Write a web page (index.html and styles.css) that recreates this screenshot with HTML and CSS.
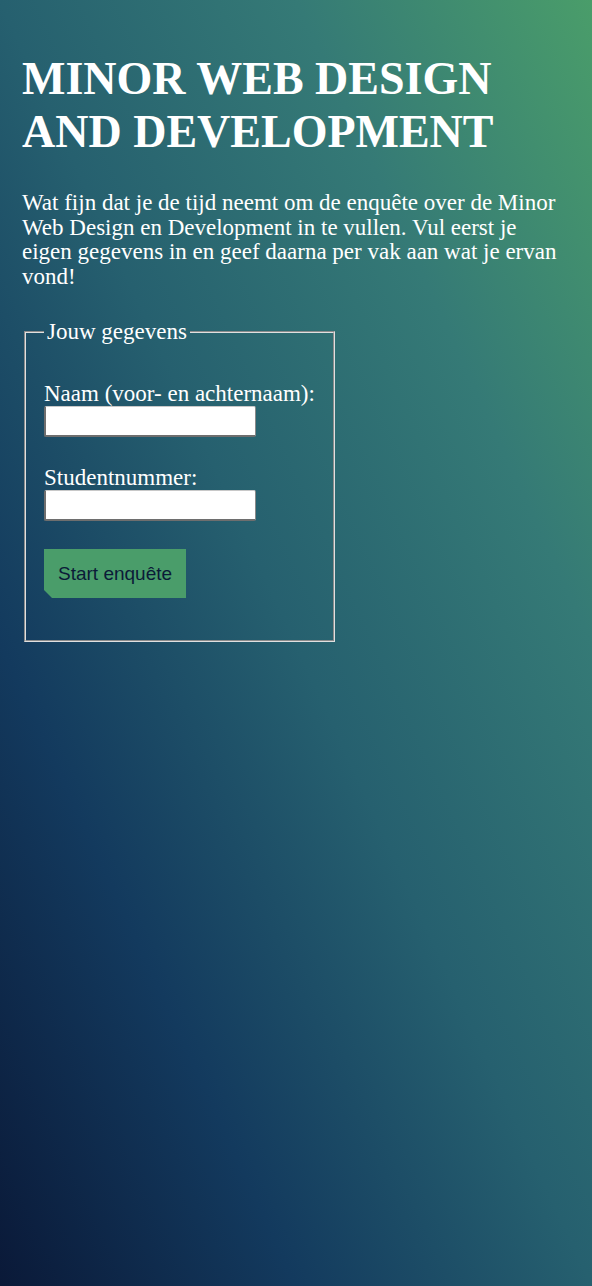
FILE: index.html
```html
<!DOCTYPE html>
<html lang="nl">
<head>
<meta charset="utf-8">
<title>Enquête Minor Web Design and Development</title>
<link rel="stylesheet" href="styles.css">
</head>
<body>
<main class="page">
  <h1 class="title">Minor Web Design and Development</h1>
  <p class="intro">Wat fijn dat je de tijd neemt om de enquête over de Minor Web Design en Development in te vullen. Vul eerst je eigen gegevens in en geef daarna per vak aan wat je ervan vond!</p>
  <form class="form">
    <fieldset class="fieldset">
      <legend class="legend">Jouw gegevens</legend>
      <div class="field">
        <label class="label" for="naam">Naam (voor- en achternaam):</label>
        <input class="input" id="naam" type="text">
      </div>
      <div class="field">
        <label class="label" for="nummer">Studentnummer:</label>
        <input class="input" id="nummer" type="text">
      </div>
      <button class="button" type="button">Start enquête</button>
    </fieldset>
  </form>
</main>
</body>
</html>
```
FILE: styles.css
```css
html {
  min-height: 100%;
  background: linear-gradient(to top right, #0a1938 0%, #133a5e 25%, #26606f 50%, #357a76 75%, #4a9d6a 100%);
  background-attachment: fixed;
}
body {
  margin: 0;
  min-height: 100vh;
  color: #fff;
  font-family: "Liberation Serif", "Times New Roman", serif;
}
.page {
  padding: 24px 22px;
}
.title {
  margin: 28px 0 0;
  font-size: 46px;
  line-height: 53px;
  font-weight: bold;
  text-transform: uppercase;
}
.intro {
  margin: 33px 0 0;
  font-size: 23px;
  line-height: 24.5px;
}
.form {
  margin-top: 30px;
}
.fieldset {
  display: inline-block;
  margin: 0 2px;
  padding: 36px 18px 42px;
  border: 2px groove #e0e0e0;
}
.legend {
  padding: 0 3px;
  font-size: 23px;
}
.field {
  display: flex;
  flex-direction: column;
  align-items: flex-start;
  margin-bottom: 28px;
}
.label {
  font-size: 23px;
  line-height: 25px;
}
.input {
  box-sizing: border-box;
  width: 212px;
  height: 31px;
  margin: 0;
  border-style: solid;
  border-width: 1px 1px 2px 2px;
  border-color: #c8c8c8 #8a8a8a #6e6e6e #6e6e6e;
  border-radius: 2px;
  background: #fff;
}
.button {
  display: block;
  margin: 0;
  padding: 0 14px;
  height: 49px;
  border: none;
  background: #4a9d6a;
  color: #0b1a38;
  font-family: "Liberation Sans", Arial, sans-serif;
  font-size: 19px;
  clip-path: polygon(0 0, 100% 0, 100% 100%, 8px 100%, 0 calc(100% - 8px));
  cursor: pointer;
}
```
